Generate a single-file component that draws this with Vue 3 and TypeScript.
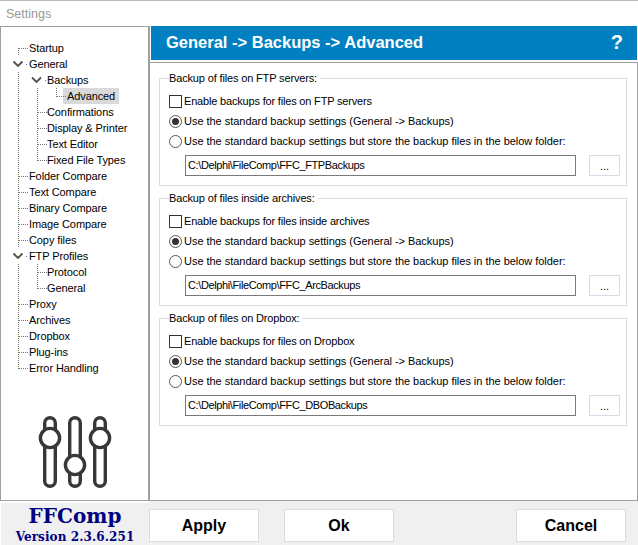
<script setup lang="ts">
interface Row { label: string; level: number; selected?: boolean }
const rows: Row[] = [
  { label: 'Startup', level: 0 },
  { label: 'General', level: 0 },
  { label: 'Backups', level: 1 },
  { label: 'Advanced', level: 2, selected: true },
  { label: 'Confirmations', level: 1 },
  { label: 'Display & Printer', level: 1 },
  { label: 'Text Editor', level: 1 },
  { label: 'Fixed File Types', level: 1 },
  { label: 'Folder Compare', level: 0 },
  { label: 'Text Compare', level: 0 },
  { label: 'Binary Compare', level: 0 },
  { label: 'Image Compare', level: 0 },
  { label: 'Copy files', level: 0 },
  { label: 'FTP Profiles', level: 0 },
  { label: 'Protocol', level: 1 },
  { label: 'General', level: 1 },
  { label: 'Proxy', level: 0 },
  { label: 'Archives', level: 0 },
  { label: 'Dropbox', level: 0 },
  { label: 'Plug-ins', level: 0 },
  { label: 'Error Handling', level: 0 },
]
const groups = [
  { legend: 'Backup of files on FTP servers:', enable: 'Enable backups for files on FTP servers', path: 'C:\\Delphi\\FileComp\\FFC_FTPBackups' },
  { legend: 'Backup of files inside archives:', enable: 'Enable backups for files inside archives', path: 'C:\\Delphi\\FileComp\\FFC_ArcBackups' },
  { legend: 'Backup of files on Dropbox:', enable: 'Enable backups for files on Dropbox', path: 'C:\\Delphi\\FileComp\\FFC_DBOBackups' },
]
</script>

<template>
  <div class="window">
    <div class="titlebar">Settings</div>
    <div class="main">
      <aside class="side">
        <div class="tree">
          <svg class="lines" width="80" height="345" viewBox="0 0 80 345">
            <g stroke="#777" stroke-width="1" stroke-dasharray="1 1" fill="none" shape-rendering="crispEdges">
              <path d="M17.5 21V29M18 21.5H27M25 37.5H27" />
              <path d="M17.5 45V221M17.5 237V342" />
              <path d="M36.5 61V133.5M37 133.5H46M37 101.5H46M37 117.5H46M37 85.5H46M44 53.5H46" />
              <path d="M55.5 61V69.5M56 69.5H65" />
              <path d="M36.5 237V261.5M37 245.5H46M37 261.5H46" />
              <path d="M18 149.5H27M18 165.5H27M18 181.5H27M18 197.5H27M18 213.5H27M25 229.5H27M18 277.5H27M18 293.5H27M18 309.5H27M18 325.5H27M18 341.5H27" />
            </g>
            <g stroke="#505050" stroke-width="1.8" fill="none">
              <path d="M12.5 34.5l4.5 4.5 4.5-4.5M31 50.5l4.5 4.5 4.5-4.5M12.5 226.5l4.5 4.5 4.5-4.5" />
            </g>
          </svg>
          <div v-for="r in rows" :key="r.label + r.level" class="row" :class="'lv' + r.level">
            <span class="label" :class="{ sel: r.selected }">{{ r.label }}</span>
          </div>
        </div>
        <svg class="sliders" width="76" height="72" viewBox="0 0 76 72" fill="none" stroke="#383838" stroke-width="3.4">
          <rect x="6.7" y="1.7" width="10.6" height="68.6" rx="5.3" fill="#fff" />
          <rect x="31.7" y="1.7" width="10.6" height="68.6" rx="5.3" fill="#fff" />
          <rect x="56.7" y="1.7" width="10.6" height="68.6" rx="5.3" fill="#fff" />
          <circle cx="12" cy="22" r="9.6" fill="#fff" />
          <circle cx="37" cy="49" r="9.6" fill="#fff" />
          <circle cx="62" cy="22" r="9.6" fill="#fff" />
        </svg>
      </aside>
      <section class="content">
        <header class="head">
          <span>General -&gt; Backups -&gt; Advanced</span>
          <span class="help">?</span>
        </header>
        <div class="panel">
          <fieldset v-for="g in groups" :key="g.legend" class="group">
            <legend>{{ g.legend }}</legend>
            <label class="opt first"><span class="check"></span>{{ g.enable }}</label>
            <label class="opt"><span class="radio on"></span>Use the standard backup settings (General -&gt; Backups)</label>
            <label class="opt"><span class="radio"></span>Use the standard backup settings but store the backup files in the below folder:</label>
            <div class="pathrow">
              <div class="path">{{ g.path }}</div>
              <div class="browse">...</div>
            </div>
          </fieldset>
        </div>
      </section>
    </div>
    <footer class="foot">
      <div class="brand">
        <div class="name">FFComp</div>
        <div class="ver">Version 2.3.6.251</div>
      </div>
      <div class="btn">Apply</div>
      <div class="btn ok">Ok</div>
      <div class="btn cancel">Cancel</div>
    </footer>
  </div>
</template>

<style>
html, body { margin: 0; padding: 0; background: #fff; }
</style>

<style scoped>
.window {
  width: 638px; height: 545px; display: flex; flex-direction: column; overflow: hidden;
  background: #fff; font-family: "Liberation Sans", Arial, sans-serif; font-size: 11px; color: #000;
}
.titlebar {
  height: 26px; flex: none; box-sizing: border-box; padding: 6px 0 0 6px; line-height: 14px; color: #999;
  font-size: 12.5px; border-top: 1px solid #b8b8b8;
}
.main { height: 474px; flex: none; display: flex; background: #fff; }
.side {
  width: 150px; flex: none; box-sizing: border-box; border: 1px solid #a0a0a0; border-width: 1px 2px 0 1px;
  display: flex; flex-direction: column; justify-content: space-between;
}
.tree { position: relative; padding-top: 13px; }
.lines { position: absolute; left: 0; top: 0; }
.row { height: 16px; line-height: 16px; white-space: nowrap; letter-spacing: -0.1px; }
.lv0 { padding-left: 28px; }
.lv1 { padding-left: 46px; }
.lv2 { padding-left: 62px; }
.label { display: inline-block; height: 16px; }
.sel { background: #d9d9d9; padding: 0 4px; }
.sliders { align-self: flex-start; margin: 0 0 12px 37px; }
.content { flex: 1; display: flex; flex-direction: column; min-width: 0; }
.head {
  height: 34px; flex: none; background: #0080c0; color: #fff; font-weight: 700; font-size: 16.5px; line-height: 33px;
  padding: 0 14px 0 15px; display: flex; justify-content: space-between; margin: 0 1px;
}
.help { font-size: 20px; }
.panel {
  flex: 1; margin-top: 2px; border: 1px solid #a0a0a0; border-width: 1px 1px 0 0;
  padding: 8px 10px 0 9px; display: flex; flex-direction: column; gap: 5px;
}
.group {
  margin: 0; height: 115px; box-sizing: border-box; border: 1px solid #dcdcdc; padding: 0 6px 0 9px; min-width: 0;
  display: flex; flex-direction: column;
}
legend { padding: 0 3px 0 0; line-height: 14px; margin-left: 0; letter-spacing: -0.15px; }
.opt { height: 20px; display: flex; align-items: center; gap: 1px; white-space: nowrap; letter-spacing: -0.03px; }
.first { margin-top: 6px; letter-spacing: -0.18px; }
.check { width: 11px; height: 11px; border: 1px solid #333; margin-right: 1px; }
.radio { width: 11px; height: 11px; border: 1px solid #555; border-radius: 50%; margin-right: 1px; position: relative; background: #fff; }
.radio.on::after { content: ""; position: absolute; inset: 2px; border-radius: 50%; background: #333; }
.pathrow { display: flex; margin: 4px 0 0 16px; gap: 13px; }
.path {
  width: 391px; height: 21px; box-sizing: border-box; border: 1px solid #7a7a7a; padding: 0 2px; line-height: 19px;
  letter-spacing: -0.38px;
}
.browse { width: 31px; height: 21px; box-sizing: border-box; border: 1px solid #dcdcdc; text-align: center; line-height: 21px; }
.foot { height: 45px; flex: none; display: flex; background: #f0f0f0; border-top: 1px solid #a0a0a0; box-sizing: border-box; }
.brand {
  width: 149px; box-sizing: border-box; border-top: 2px solid #fff; border-left: 1px solid #fff;
  text-align: center; color: #000080; font-family: "DejaVu Serif", serif; font-weight: 700;
}
.name { font-size: 20px; line-height: 20px; margin-top: 3px; }
.ver { font-size: 12px; line-height: 13px; margin-top: 5px; letter-spacing: 0.1px; }
.btn {
  width: 110px; height: 33px; margin-top: 8px; box-sizing: border-box; background: #fff; border: 1px solid #dcdcdc;
  text-align: center; line-height: 31px; font-weight: 700; font-size: 16px;
}
.ok { margin-left: 25px; }
.cancel { margin-left: 122px; }
</style>
